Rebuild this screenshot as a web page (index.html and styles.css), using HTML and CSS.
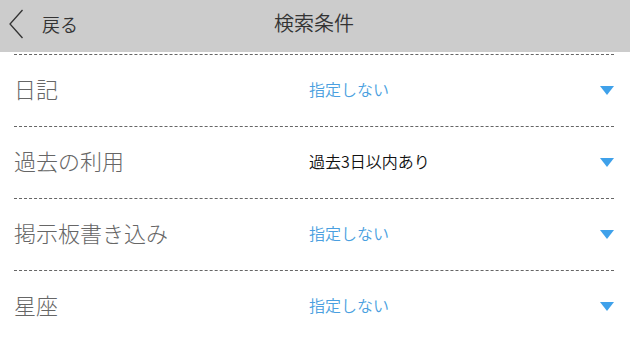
FILE: index.html
```html
<!DOCTYPE html>
<html lang="ja">
<head>
  <meta charset="UTF-8"/>
  <meta name="viewport" content="width=device-width, initial-scale=1.0"/>
  <title>検索条件</title>
  <link rel="stylesheet" href="styles.css">
</head>
<body>

  <!-- Header -->
  <div class="header">
    <a class="back-link" href="#">
      <svg class="back-icon" width="16" height="30" viewBox="0 0 16 30">
        <polyline points="14.5,1 2,15 14.5,29" fill="none" stroke="#333" stroke-width="1.3"/>
      </svg>
      <span>戻る</span>
    </a>
    <div class="header-title">検索条件</div>
  </div>

  <!-- Condition list -->
  <div class="condition-list">
    <div class="condition-row">
      <div class="condition-label">日記</div>
      <div class="condition-value">指定しない</div>
      <div class="condition-arrow"></div>
    </div>
    <div class="condition-row">
      <div class="condition-label">過去の利用</div>
      <div class="condition-value selected">過去3日以内あり</div>
      <div class="condition-arrow"></div>
    </div>
    <div class="condition-row">
      <div class="condition-label">掲示板書き込み</div>
      <div class="condition-value">指定しない</div>
      <div class="condition-arrow"></div>
    </div>
    <div class="condition-row">
      <div class="condition-label">星座</div>
      <div class="condition-value">指定しない</div>
      <div class="condition-arrow"></div>
    </div>
  </div>

</body>
</html>
```

FILE: styles.css
```css
/**********************************************
 *  Base
 **********************************************/
body {
  margin: 0;
  padding: 0;
  background-color: #fff;
  font-family: "Noto Sans CJK JP", "Noto Sans", sans-serif;
  overflow: hidden;
}

/**********************************************
 *  Header
 **********************************************/
.header {
  position: relative;
  height: 52px;
  background-color: #cccccc;
  display: flex;
  align-items: center;
  justify-content: center;
}

.back-link {
  position: absolute;
  left: 8px;
  top: 9px;
  display: flex;
  align-items: center;
  gap: 18px;
  color: #333;
  text-decoration: none;
  font-size: 18px;
  font-weight: 350;
}

.back-icon {
  display: block;
}

.header-title {
  font-size: 20px;
  font-weight: 350;
  color: #333;
  margin-left: -2px;
  margin-top: -7px;
}

/**********************************************
 *  Condition list
 **********************************************/
.condition-list {
  margin: 2px 16px 0 14px;
}

.condition-row {
  display: flex;
  align-items: center;
  height: 71px;
  border-top: 1px dashed #666;
}

.condition-label {
  width: 295px;
  font-size: 22px;
  font-weight: 300;
  color: #666;
  margin-top: -5px;
}

.condition-value {
  flex-grow: 1;
  font-size: 16px;
  font-weight: 350;
  color: #4a9fe0;
  margin-top: -3px;
}

.condition-value.selected {
  color: #111;
}

.condition-arrow {
  width: 0;
  height: 0;
  border-left: 7px solid transparent;
  border-right: 7px solid transparent;
  border-top: 9px solid #3fa1ea;
}
```
